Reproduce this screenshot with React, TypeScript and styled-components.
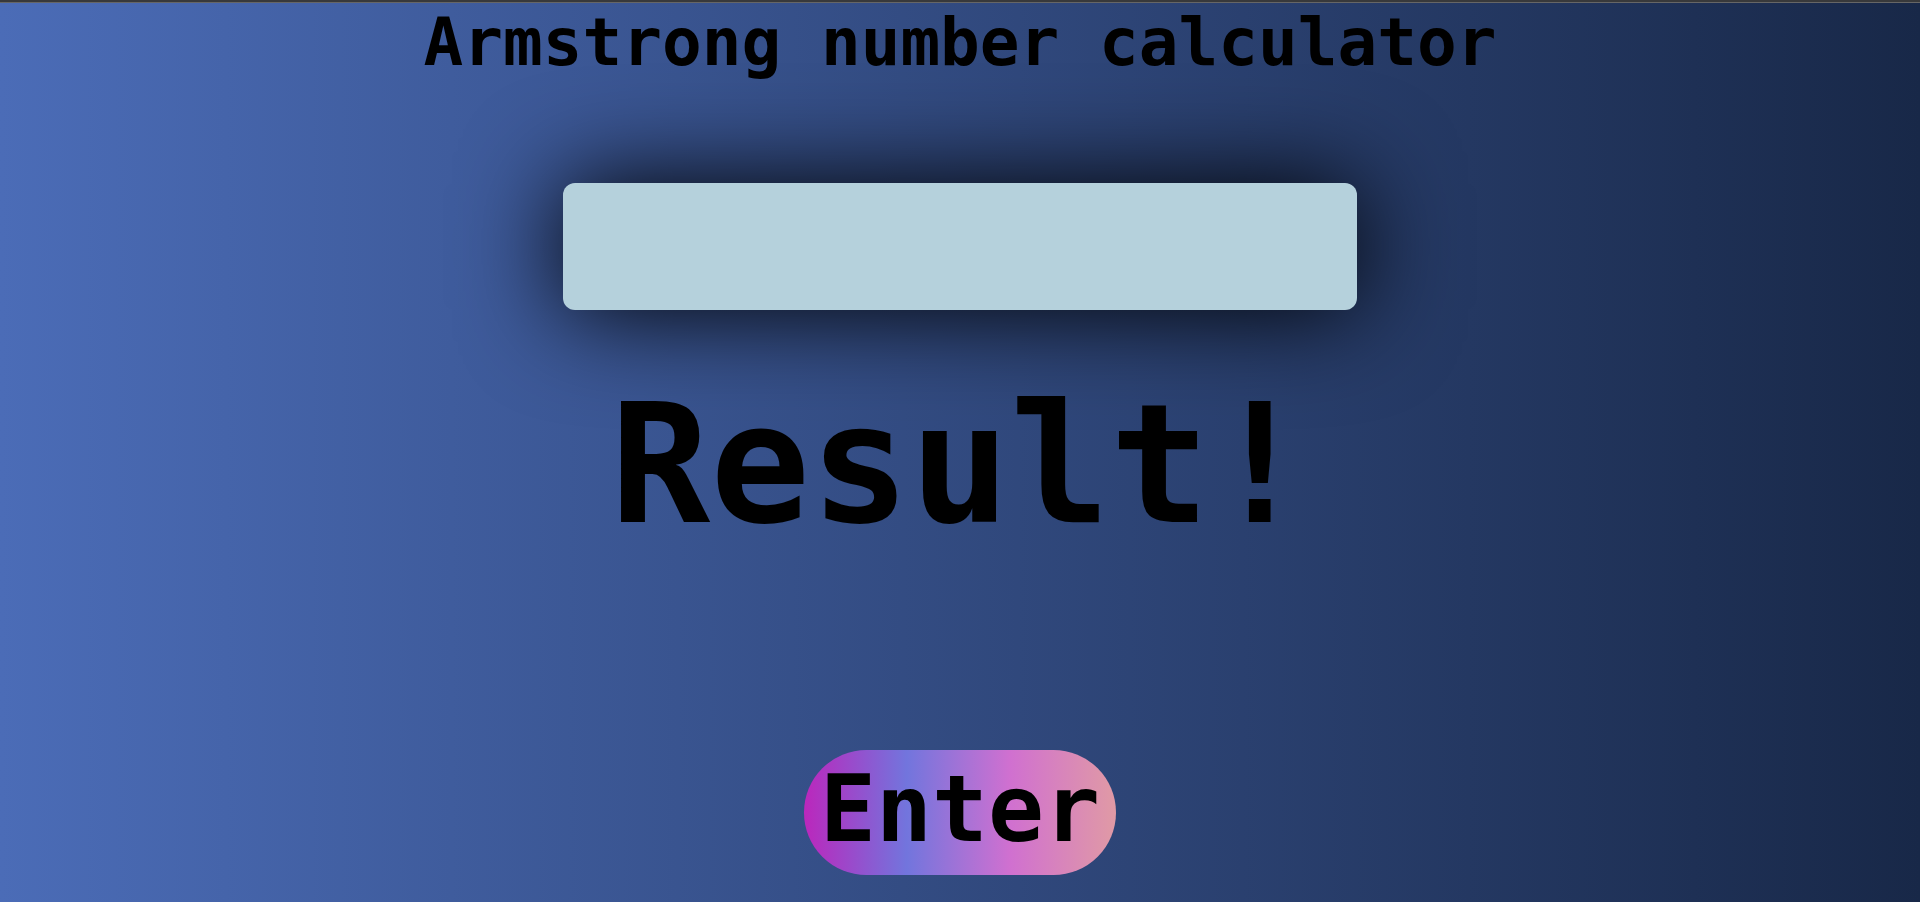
import React, { useState } from "react";
import styled, { createGlobalStyle } from "styled-components";

const GlobalStyle = createGlobalStyle`
  * {
    box-sizing: border-box;
  }
  body {
    margin: 0;
    font-family: "DejaVu Sans Mono", "Liberation Mono", monospace;
    font-weight: 700;
    color: #000;
  }
`;

const Page = styled.main`
  min-height: 100vh;
  display: flex;
  flex-direction: column;
  align-items: center;
  border-top: 2px solid #38393b;
  background: linear-gradient(to right, #4b6cb7, #182848) border-box;
`;

const Divider = styled.div`
  align-self: stretch;
  height: 1px;
  background: #666666;
`;

const Calculator = styled.form`
  width: 100%;
  display: flex;
  flex-direction: column;
  align-items: center;
`;

const Title = styled.h1`
  margin: 0;
  font-size: 66px;
  line-height: 80px;
  text-align: center;
`;

const NumberInput = styled.input`
  width: 100%;
  max-width: 794px;
  height: 127px;
  margin-top: 100px;
  padding: 0 24px;
  border: 0;
  border-radius: 12px;
  outline: 0;
  background: #b5d1dc;
  box-shadow: 0 0 100px #000;
  font: inherit;
  font-size: 66px;
  text-align: center;
`;

const Result = styled.output`
  margin-top: 71px;
  font-size: 166px;
  line-height: 168px;
  text-align: center;
`;

const EnterButton = styled.button`
  height: 125px;
  margin: 201px 0 24px;
  padding: 0 16px 8px;
  border: 0;
  border-radius: 64px;
  background: linear-gradient(
    to right,
    #bb27bc,
    #7275dd 33%,
    #d070d0 66%,
    #e09aa5
  );
  color: inherit;
  font: inherit;
  font-size: 93px;
  cursor: pointer;
`;

function isArmstrong(value: string): boolean {
  const total = [...value].reduce(
    (sum, digit) => sum + Number(digit) ** value.length,
    0
  );
  return total === Number(value);
}

export default function App() {
  const [value, setValue] = useState("");
  const [result, setResult] = useState("Result!");

  const handleSubmit = (event: React.FormEvent) => {
    event.preventDefault();
    if (/^\d+$/.test(value)) {
      setResult(isArmstrong(value) ? "Yes!" : "No!");
    }
  };

  return (
    <>
      <GlobalStyle />
      <Page>
        <Divider />
        <Title>Armstrong number calculator</Title>
        <Calculator onSubmit={handleSubmit}>
          <NumberInput
            id="number"
            inputMode="numeric"
            aria-label="Number"
            value={value}
            onChange={(event) => setValue(event.target.value)}
          />
          <Result htmlFor="number">{result}</Result>
          <EnterButton type="submit">Enter</EnterButton>
        </Calculator>
      </Page>
    </>
  );
}
